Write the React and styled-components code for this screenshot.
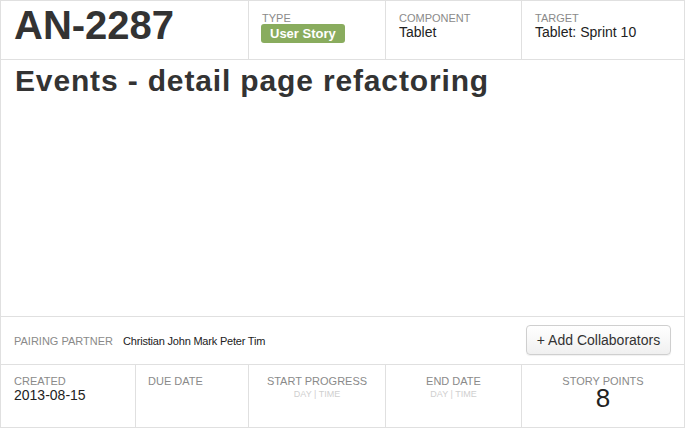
import React from 'react'
import styled, { createGlobalStyle } from 'styled-components'

const GlobalStyle = createGlobalStyle`
    body {
        margin: 0;
        background: #fff;
        font-family: "Liberation Sans", Arial, Helvetica, sans-serif;
        color: #333;
    }
    * { box-sizing: border-box; }
`

const Card = styled.div`
    width: 685px;
    height: 428px;
    border: 1px solid #e0e0e0;
    display: flex;
    flex-direction: column;
    background: #fff;
`

const Header = styled.div`
    display: grid;
    grid-template-columns: 248px 137px 136px 1fr;
    height: 59px;
    flex: none;
    border-bottom: 1px solid #e0e0e0;
`

const Cell = styled.div`
    padding: ${p => p.$pad || '11px 13px 0'};
    border-right: ${p => (p.$last ? 'none' : '1px solid #e0e0e0')};
    text-align: ${p => (p.$center ? 'center' : 'left')};
    min-width: 0;
`

const Key = styled.h1`
    margin: 0;
    font-size: 40px;
    font-weight: bold;
    color: #333;
    line-height: normal;
`

const Label = styled.div`
    font-size: 11px;
    color: #8a8a8a;
    text-transform: uppercase;
    line-height: normal;
    white-space: nowrap;
`

const Value = styled.div`
    font-size: 14px;
    color: #222;
    line-height: normal;
`

const Badge = styled.span`
    display: inline-block;
    margin-left: -1px;
    height: 19px;
    padding: 0 9px;
    line-height: 19px;
    border-radius: 3px;
    background: #89ac5e;
    color: #fff;
    font-size: 13px;
    font-weight: bold;
`

const Body = styled.div`
    flex: 1;
    padding: 4px 14px 0;
    border-bottom: 1px solid #e0e0e0;
`

const Title = styled.h2`
    margin: 0;
    font-size: 30px;
    font-weight: bold;
    letter-spacing: 0.85px;
    color: #333;
    line-height: normal;
`

const PairingRow = styled.div`
    height: 48px;
    flex: none;
    display: flex;
    align-items: center;
    padding: 0 13px;
    border-bottom: 1px solid #e0e0e0;
`

const Names = styled.span`
    margin-left: 10px;
    font-size: 11px;
    letter-spacing: -0.2px;
    color: #222;
    flex: 1;
`

const AddButton = styled.button`
    height: 30px;
    width: 145px;
    padding: 0;
    margin-top: -1px;
    border: 1px solid #cfcfcf;
    border-radius: 4px;
    background: linear-gradient(#ffffff, #f0f0f0);
    box-shadow: 0 1px 1px rgba(0, 0, 0, 0.06);
    font-family: inherit;
    font-size: 14px;
    color: #333;
    cursor: pointer;
`

const Footer = styled.div`
    height: 62px;
    flex: none;
    display: grid;
    grid-template-columns: 135px 113px 137px 136px 1fr;
`

const Hint = styled.div`
    margin-top: 2px;
    font-size: 9px;
    color: #cfcfcf;
    text-transform: uppercase;
`

const Points = styled.div`
    font-size: 26px;
    line-height: 22px;
    color: #222;
`

const fields = [
    { label: 'Type', badge: 'User Story' },
    { label: 'Component', value: 'Tablet' },
    { label: 'Target', value: 'Tablet: Sprint 10' },
]

export default function App() {
    return (
        <>
            <GlobalStyle />
            <Card>
                <Header>
                    <Cell $pad="2px 13px 0">
                        <Key>AN-2287</Key>
                    </Cell>
                    {fields.map((f, i) => (
                        <Cell key={f.label} $last={i === fields.length - 1}>
                            <Label>{f.label}</Label>
                            {f.badge ? <Badge>{f.badge}</Badge> : <Value>{f.value}</Value>}
                        </Cell>
                    ))}
                </Header>
                <Body>
                    <Title>Events - detail page refactoring</Title>
                </Body>
                <PairingRow>
                    <Label>Pairing Partner</Label>
                    <Names>Christian John Mark Peter Tim</Names>
                    <AddButton>+ Add Collaborators</AddButton>
                </PairingRow>
                <Footer>
                    <Cell $pad="10px 13px 0">
                        <Label>Created</Label>
                        <Value>2013-08-15</Value>
                    </Cell>
                    <Cell $pad="10px 12px 0">
                        <Label>Due Date</Label>
                    </Cell>
                    <Cell $pad="10px 0 0" $center>
                        <Label>Start Progress</Label>
                        <Hint>Day | Time</Hint>
                    </Cell>
                    <Cell $pad="10px 0 0" $center>
                        <Label>End Date</Label>
                        <Hint>Day | Time</Hint>
                    </Cell>
                    <Cell $pad="10px 0 0" $center $last>
                        <Label>Story Points</Label>
                        <Points>8</Points>
                    </Cell>
                </Footer>
            </Card>
        </>
    )
}
